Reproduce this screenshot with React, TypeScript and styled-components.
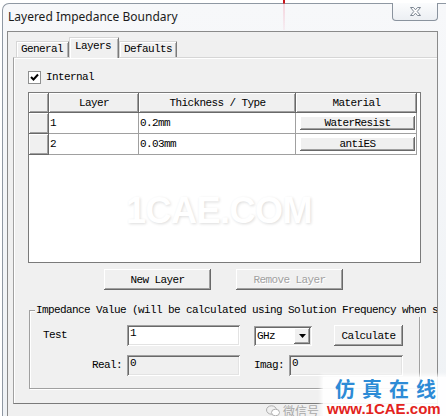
import React from 'react';
import styled, { createGlobalStyle, css } from 'styled-components';

const GlobalStyle = createGlobalStyle`
  html, body {
    margin: 0;
    padding: 0;
    background: #ffffff;
  }
  body {
    width: 446px;
    height: 416px;
    overflow: hidden;
  }
`;

// Fuente de sistema tipo SimSun: 6px por carácter
const dialogFont = css`
  font-family: 'Liberation Mono', 'DejaVu Sans Mono', monospace;
  font-size: 11px;
  letter-spacing: -0.6px;
  color: #000000;
`;

const raised = css`
  background: #f0f0f0;
  box-shadow: inset -1px -1px 0 #696969, inset 1px 1px 0 #ffffff,
    inset -2px -2px 0 #a0a0a0, inset 2px 2px 0 #f0f0f0;
`;

const sunken = css`
  box-shadow: inset 1px 1px 0 #a0a0a0, inset -1px -1px 0 #ffffff,
    inset 2px 2px 0 #696969, inset -2px -2px 0 #e3e3e3;
`;

const Desktop = styled.div`
  position: relative;
  width: 446px;
  height: 416px;
  overflow: hidden;
  background: #ffffff;
  padding-top: 3px;
  box-sizing: border-box;
`;

const Window = styled.div`
  margin-left: 2px;
  width: 460px;
  height: 413px;
  box-sizing: border-box;
  border-top: 1px solid #8f98a3;
  border-left: 1px solid #8f98a3;
  border-top-left-radius: 7px;
  background: linear-gradient(180deg, #f7f8fa 0%, #eff2f5 100%);
  display: flex;
  flex-direction: column;
`;

const TitleBar = styled.div`
  height: 27px;
  display: flex;
  justify-content: space-between;
  align-items: flex-start;
  padding: 0 24px 0 5px;
`;

const Title = styled.span`
  font-family: 'Noto Sans', 'Open Sans', sans-serif;
  font-size: 12px;
  line-height: 16px;
  padding-top: 5px;
  color: #1b1b1b;
`;

const CloseButton = styled.div`
  width: 44px;
  height: 17px;
  margin-top: -1px;
  border: 1px solid #8a939e;
  border-top: none;
  border-radius: 0 0 4px 4px;
  background: linear-gradient(180deg, #fbfcfd 0%, #eceff3 100%);
  display: flex;
  align-items: center;
  justify-content: center;
`;

const Client = styled.div`
  flex: 1;
  margin-left: 4px;
  width: 429px;
  background: #f0f0f0;
  border: 1px solid #8a8a8a;
  border-bottom: none;
  overflow: hidden;
  display: flex;
  flex-direction: column;
`;

const TabStrip = styled.div`
  height: 25px;
  padding-left: 8px;
  display: flex;
  align-items: flex-end;
`;

const Tab = styled.div<{ $active?: boolean; $w: number }>`
  ${dialogFont};
  position: relative;
  z-index: ${p => (p.$active ? 2 : 1)};
  box-sizing: border-box;
  width: ${p => p.$w}px;
  height: ${p => (p.$active ? 21 : 16)}px;
  margin-bottom: ${p => (p.$active ? -1 : 0)}px;
  padding-left: ${p => (p.$active ? 5 : 4)}px;
  padding-top: ${p => (p.$active ? 2 : 1)}px;
  line-height: 13px;
  background: #f0f0f0;
  border-top: 1px solid #d6d6d6;
  border-left: 1px solid #d6d6d6;
  border-right: 1px solid #7a7a7a;
  border-radius: 1px 1px 0 0;
  box-shadow: inset 1px 1px 0 #ffffff, inset -1px 0 0 #b4b4b4;
`;

const TabPage = styled.div`
  margin-left: 5px;
  width: 440px;
  height: 347px;
  box-sizing: border-box;
  border-top: 1px solid #d6d6d6;
  border-left: 1px solid #a0a0a0;
  border-bottom: 1px solid #7a7a7a;
  box-shadow: inset 1px 1px 0 #ffffff;
  background: #f0f0f0;
`;

const CheckRow = styled.label`
  display: flex;
  align-items: center;
  margin: 13px 0 0 14px;
  height: 13px;
`;

const CheckBox = styled.span`
  width: 13px;
  height: 13px;
  box-sizing: border-box;
  background: #ffffff;
  border: 1px solid #8e8f8f;
  display: flex;
  align-items: center;
  justify-content: center;
`;

const CheckLabel = styled.span`
  ${dialogFont};
  margin-left: 5px;
  line-height: 13px;
`;

const Table = styled.div`
  position: relative;
  margin: 8px 0 0 14px;
  width: 393px;
  height: 171px;
  box-sizing: border-box;
  border: 1px solid #7a7a7a;
  background: #ffffff;
  display: grid;
  grid-template-columns: 20px 90px 157px 121px 1fr;
  grid-template-rows: 20px 21px 21px 1fr;
  overflow: hidden;
`;

const HeaderCell = styled.div`
  ${dialogFont};
  ${raised};
  display: flex;
  align-items: center;
  justify-content: center;
  padding-bottom: 1px;
`;

const RowHeader = styled.div`
  ${raised};
`;

const Cell = styled.div<{ $pad?: boolean }>`
  ${dialogFont};
  display: flex;
  align-items: center;
  box-sizing: border-box;
  padding: ${p => (p.$pad ? '3px 1px 3px 4px' : '0 0 0 1px')};
  border-right: 1px solid #a0a0a0;
  border-bottom: 1px solid #a0a0a0;
  background: #ffffff;
`;

const CellButton = styled.div`
  ${dialogFont};
  ${raised};
  flex: 1;
  height: 100%;
  display: flex;
  align-items: center;
  justify-content: center;
`;

const Filler = styled.div`
  grid-column: 1 / -1;
`;

const Watermark = styled.div`
  position: absolute;
  left: 97px;
  top: 97px;
  font-family: 'Liberation Sans', Arial, sans-serif;
  font-weight: 700;
  font-size: 36px;
  letter-spacing: -0.5px;
  color: #ffffff;
  text-shadow: 1px 1px 3px rgba(0, 0, 0, 0.14);
  pointer-events: none;
`;

const ButtonRow = styled.div`
  display: flex;
  gap: 25px;
  margin: 6px 0 0 90px;
`;

const PushButton = styled.div<{ $disabled?: boolean; $w: number }>`
  ${dialogFont};
  ${raised};
  width: ${p => p.$w}px;
  height: 21px;
  display: flex;
  align-items: center;
  justify-content: center;
  color: ${p => (p.$disabled ? '#a0a0a0' : '#000000')};
  text-shadow: ${p => (p.$disabled ? '1px 1px 0 #ffffff' : 'none')};
`;

const GroupBox = styled.div`
  position: relative;
  margin: 20px 0 0 15px;
  width: 391px;
  height: 79px;
  box-sizing: border-box;
  border: 1px solid #a0a0a0;
  box-shadow: inset 1px 1px 0 #ffffff, 1px 1px 0 #ffffff;
  padding: 14px 0 0 13px;
`;

const Legend = styled.span`
  ${dialogFont};
  position: absolute;
  top: -7px;
  left: 5px;
  line-height: 13px;
  white-space: nowrap;
  background: #f0f0f0;
  padding: 0 1px;
`;

const FormRow = styled.div<{ $gap?: number }>`
  display: flex;
  align-items: center;
  margin-top: ${p => p.$gap ?? 0}px;
  height: 21px;
`;

const FieldLabel = styled.span<{ $w: number; $right?: boolean }>`
  ${dialogFont};
  width: ${p => p.$w}px;
  box-sizing: border-box;
  text-align: ${p => (p.$right ? 'right' : 'left')};
  padding-right: ${p => (p.$right ? 5 : 0)}px;
  padding-bottom: 2px;
`;

const TextField = styled.div<{ $w: number; $readOnly?: boolean }>`
  ${dialogFont};
  ${sunken};
  width: ${p => p.$w}px;
  height: 21px;
  box-sizing: border-box;
  padding: 2px 0 0 3px;
  line-height: 13px;
  background: ${p => (p.$readOnly ? '#f0f0f0' : '#ffffff')};
`;

const Spacer = styled.span<{ $w: number }>`
  width: ${p => p.$w}px;
`;

const Combo = styled.div`
  ${sunken};
  width: 58px;
  height: 20px;
  box-sizing: border-box;
  background: #ffffff;
  display: flex;
  align-items: center;
  padding: 2px 2px 2px 3px;
`;

const ComboText = styled.span`
  ${dialogFont};
  flex: 1;
`;

const ComboButton = styled.div`
  ${raised};
  width: 16px;
  height: 16px;
  display: flex;
  align-items: center;
  justify-content: center;
`;

const Brand = styled.div`
  position: absolute;
  left: 323px;
  top: 377px;
  width: 123px;
  height: 39px;
  background: rgba(255, 255, 255, 0.92);
  box-shadow: 0 0 4px 2px rgba(255, 255, 255, 0.9);
  display: flex;
  flex-direction: column;
  align-items: flex-start;
`;

const BrandCn = styled.span`
  font-family: 'Noto Sans CJK SC', sans-serif;
  font-weight: 700;
  font-size: 20px;
  line-height: 24px;
  height: 24px;
  letter-spacing: 7px;
  margin-left: 12px;
  color: #2d8bd6;
`;

const BrandUrl = styled.span`
  font-family: 'Liberation Sans', Arial, sans-serif;
  font-weight: 700;
  font-size: 15px;
  line-height: 15px;
  margin-left: 4px;
  color: #e3231c;
`;

const WeChat = styled.div`
  position: absolute;
  left: 266px;
  top: 402px;
  display: flex;
  align-items: center;
  gap: 3px;
  font-family: 'Noto Sans CJK SC', sans-serif;
  font-size: 12px;
  color: #a9a9a9;
`;

const RedMark = styled.div`
  position: absolute;
  left: 283px;
  top: 0;
  width: 2px;
  height: 30px;
  background: linear-gradient(180deg, #c8141a 0%, #c8141a 10%, rgba(240, 150, 170, 0.35) 14%, rgba(240, 180, 200, 0.15) 100%);
  pointer-events: none;
`;

const rows = [
  { id: 1, thickness: '0.2mm', material: 'WaterResist' },
  { id: 2, thickness: '0.03mm', material: 'antiES' },
];

const App: React.FC = () => {
  return (
    <Desktop>
      <GlobalStyle />
      <Window>
        <TitleBar>
          <Title>Layered Impedance Boundary</Title>
          <CloseButton>
            <svg width="13" height="11" viewBox="0 0 13 11">
              <path
                d="M1.5 1.5 H4.5 L6.5 3.8 L8.5 1.5 H11.5 L8.2 5.5 L11.5 9.5 H8.5 L6.5 7.2 L4.5 9.5 H1.5 L4.8 5.5 Z"
                fill="#ffffff"
                stroke="#7d8793"
                strokeWidth="1"
              />
            </svg>
          </CloseButton>
        </TitleBar>

        <Client>
          <TabStrip>
            <Tab $w={53}>General</Tab>
            <Tab $w={50} $active>Layers</Tab>
            <Tab $w={58}>Defaults</Tab>
          </TabStrip>

          <TabPage>
            <CheckRow>
              <CheckBox>
                <svg width="9" height="9" viewBox="0 0 9 9">
                  <path d="M1 4 L3.5 6.5 L8 1.5" fill="none" stroke="#000" strokeWidth="2" />
                </svg>
              </CheckBox>
              <CheckLabel>Internal</CheckLabel>
            </CheckRow>

            <Table>
              <RowHeader />
              <HeaderCell>Layer</HeaderCell>
              <HeaderCell>Thickness / Type</HeaderCell>
              <HeaderCell>Material</HeaderCell>
              <div />
              {rows.map(r => (
                <React.Fragment key={r.id}>
                  <RowHeader />
                  <Cell>{r.id}</Cell>
                  <Cell>{r.thickness}</Cell>
                  <Cell $pad>
                    <CellButton>{r.material}</CellButton>
                  </Cell>
                  <div />
                </React.Fragment>
              ))}
              <Filler />
              <Watermark>1CAE.COM</Watermark>
            </Table>

            <ButtonRow>
              <PushButton $w={107}>New Layer</PushButton>
              <PushButton $w={107} $disabled>Remove Layer</PushButton>
            </ButtonRow>

            <GroupBox>
              <Legend>Impedance Value (will be calculated using Solution Frequency when solving)</Legend>
              <FormRow>
                <FieldLabel $w={84}>Test</FieldLabel>
                <TextField $w={113}>1</TextField>
                <Spacer $w={14} />
                <Combo>
                  <ComboText>GHz</ComboText>
                  <ComboButton>
                    <svg width="7" height="4" viewBox="0 0 7 4">
                      <path d="M0 0 H7 L3.5 4 Z" fill="#000" />
                    </svg>
                  </ComboButton>
                </Combo>
                <Spacer $w={22} />
                <PushButton $w={69}>Calculate</PushButton>
              </FormRow>
              <FormRow $gap={9}>
                <FieldLabel $w={84} $right>Real:</FieldLabel>
                <TextField $w={113} $readOnly>0</TextField>
                <Spacer $w={14} />
                <FieldLabel $w={35}>Imag:</FieldLabel>
                <TextField $w={114} $readOnly>0</TextField>
              </FormRow>
            </GroupBox>
          </TabPage>
        </Client>
      </Window>

      <RedMark />
      <WeChat>
        <svg width="14" height="12" viewBox="0 0 14 12">
          <ellipse cx="5.5" cy="5" rx="5" ry="4.2" fill="none" stroke="#b0b0b0" strokeWidth="1" />
          <ellipse cx="9.5" cy="7.5" rx="4" ry="3.3" fill="#ffffff" stroke="#b0b0b0" strokeWidth="1" />
        </svg>
        <span>微信号</span>
      </WeChat>
      <Brand>
        <BrandCn>仿真在线</BrandCn>
        <BrandUrl>www.1CAE.com</BrandUrl>
      </Brand>
    </Desktop>
  );
};

export default App;
